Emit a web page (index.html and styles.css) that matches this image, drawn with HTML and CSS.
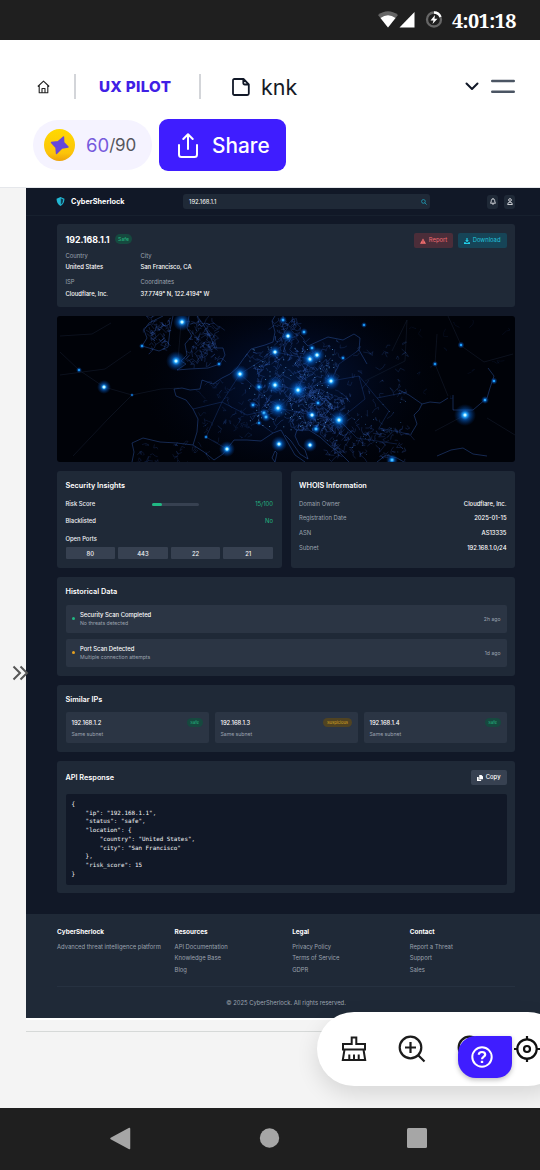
FILE: index.html
```html
<!DOCTYPE html>
<html lang="en">
<head>
<meta charset="utf-8">
<title>UX Pilot</title>
<link rel="stylesheet" href="styles.css">
</head>
<body>
<div class="status">
  <svg class="status-icons" width="68" height="20" viewBox="0 0 68 20">
    <path d="M0 5Q10-2.500 20 5L10 17.500Z" fill="#666"/><path d="M2.500 8Q10 2.500 17.500 8L10 17.500Z" fill="#fff"/>
    <path d="M21.500 17.500H36.500V2Z" fill="#fff"/>
    <circle cx="56" cy="9.500" r="7" fill="none" stroke="#666" stroke-width="2.300"/>
    <path d="M56 2.500A7 7 0 0 1 62.500 7" fill="none" stroke="#fff" stroke-width="2.300"/>
    <path d="M57 5L52.500 10.500H55.500L54.500 14L59.500 8.700H56.500Z" fill="#fff"/>
  </svg>
  <span class="clock">4:01:18</span>
</div>

<header class="top">
  <div class="top-row">
    <svg class="home" width="13" height="14" viewBox="0 0 13 14" fill="none" stroke="#222" stroke-width="1.100" stroke-linejoin="round"><path d="M.8 6.500L6.500 1.200L12.200 6.500M2.200 5.500V12.700H10.800V5.500M5 12.500V8.500H8V12.500"/></svg>
    <i class="sep"></i>
    <span class="brand">UX PILOT</span>
    <i class="sep sep2"></i>
    <svg class="file" width="18" height="18" viewBox="0 0 18 18" fill="none" stroke="#111827" stroke-width="1.800" stroke-linejoin="round"><path d="M2.500 1H11.500L16.800 6.300V15.500Q16.800 17 15.300 17H2.500Q1 17 1 15.500V2.500Q1 1 2.500 1ZM11.300 1.200V5Q11.300 6.500 12.800 6.500H16.500"/></svg>
    <span class="project">knk</span>
    <svg class="chev" width="14" height="9" viewBox="0 0 14 9" fill="none" stroke="#111827" stroke-width="2" stroke-linecap="round" stroke-linejoin="round"><path d="M1.500 1.500L7 7L12.500 1.500"/></svg>
    <svg width="24" height="15" viewBox="0 0 24 15" stroke="#4b5563" stroke-width="2.400" stroke-linecap="round"><path d="M1.200 2H22.800M1.200 12.800H22.800"/></svg>
  </div>
  <div class="actions">
    <div class="credits">
      <svg width="31" height="32" viewBox="0 0 31 32"><defs><linearGradient id="coin" x1="0" y1="0" x2="0" y2="1"><stop offset="0" stop-color="#ffd900"/><stop offset=".75" stop-color="#fcc40a"/><stop offset="1" stop-color="#eda20b"/></linearGradient></defs><ellipse cx="15.500" cy="16" rx="15.500" ry="16" fill="url(#coin)"/><path d="M19.500 8L19.700 13.500L24 18L18 19L12.500 24.500L12 18.500L7.500 13.500L14 12.700Z" fill="#6546dc" stroke="#6546dc" stroke-width="1.400" stroke-linejoin="round"/></svg>
      <span class="used">60</span><span class="total">/90</span>
    </div>
    <button class="share"><svg width="20" height="25" viewBox="0 0 20 25" fill="none" stroke="#fff" stroke-width="2" stroke-linecap="round" stroke-linejoin="round"><path d="M1 12V21.500Q1 24 3.500 24H16.500Q19 24 19 21.500V12M10 16V1.500M5.300 6L10 1.300L14.700 6"/></svg>Share</button>
  </div>
</header>

<main class="canvas">
  <div class="frame">
    <nav class="nav">
      <div class="logo"><svg width="9" height="9" viewBox="0 0 16 16"><path d="M8 0L15 3Q15 12 8 16Q1 12 1 3Z" fill="#22b8d4"/><path d="M8.500 2.200L13 4.300Q12.700 10.500 8.500 13.700Z" fill="#123d52"/></svg><span>CyberSherlock</span></div>
      <div class="search"><span>192.168.1.1</span><svg width="6" height="6" viewBox="0 0 16 16" fill="none" stroke="#1fa6c0" stroke-width="2"><circle cx="6.500" cy="6.500" r="5"/><path d="M10 10L15 15"/></svg></div>
      <div class="tools">
        <i><svg width="6" height="7" viewBox="0 0 14 16" fill="none" stroke="#e5e7eb" stroke-width="2"><path d="M1 12Q3 10 3 6A4 4 0 0 1 11 6Q11 10 13 12ZM5 14H9M7 0V2"/></svg></i>
        <i><svg width="6" height="7" viewBox="0 0 14 16" fill="none" stroke="#e5e7eb" stroke-width="2"><circle cx="7" cy="4.500" r="3.200"/><path d="M1.500 15Q1.500 9.500 7 9.500T12.500 15Z"/></svg></i>
      </div>
    </nav>

    <div class="content">
      <section class="card summary">
        <div class="summary-head">
          <h1>192.168.1.1</h1><span class="badge safe big">Safe</span>
          <span class="btn red"><svg width="6" height="6" viewBox="0 0 16 16"><path d="M8 1L16 15H0Z" fill="#f87171"/><path d="M8 6V10M8 11.500V13" stroke="#63303c" stroke-width="1.800"/></svg>Report</span>
          <span class="btn cyan"><svg width="6" height="6" viewBox="0 0 16 16" fill="#22d3ee"><path d="M6.500 0H9.500V6H13L8 11L3 6H6.500ZM0 11H4L8 14L12 11H16V16H0Z"/></svg>Download</span>
        </div>
        <div class="facts">
          <div><span>Country</span><b>United States</b></div><div><span>City</span><b>San Francisco, CA</b></div>
          <div><span>ISP</span><b>Cloudflare, Inc.</b></div><div><span>Coordinates</span><b>37.7749° N, 122.4194° W</b></div>
        </div>
      </section>

      <svg class="map" viewBox="0 0 458 146" width="458" height="146">
        <defs>
          <radialGradient id="land"><stop offset="0" stop-color="#032158" stop-opacity=".6"/><stop offset=".45" stop-color="#020f30" stop-opacity=".55"/><stop offset="1" stop-color="#010514" stop-opacity="0"/></radialGradient>
          <radialGradient id="glow"><stop offset="0" stop-color="#8ee6ff"/><stop offset=".2" stop-color="#20a4ff"/><stop offset=".45" stop-color="#0763cd" stop-opacity=".6"/><stop offset="1" stop-color="#023a91" stop-opacity="0"/></radialGradient>
        </defs>
        <rect width="458" height="146" fill="#000208"/>
        <ellipse cx="235" cy="68" rx="150" ry="100" fill="url(#land)"/>
        <path d="M92 32L85 30L90 22L87 14L92 7L100 3L106 0M116 0L113 14L111 31L102 35L92 32M140 0L146 8L153 20L158 32L166 32L168 39L163 48L151 52L132 53L120 54L129 48L124 45L130 39L128 28L135 20L130 12L132 0M117 73L125 72L133 74L143 73L145 64L156 68L165 62L173 58L180 52L187 42L194 33L208 29L216 26L218 16L215 5L218 0M117 73L119 80L129 84L136 93L141 103L140 116L136 129L120 127L103 126L86 122L75 127L77 136L75 146M136 129L147 136L157 144M157 144L166 138L170 133L177 124L190 124L204 125L216 117L224 114L230 125L238 139L248 146M218 135L215 142L218 146L220 137ZM228 119L234 125L243 138L251 143L248 134L242 129L238 120L240 114L252 114L263 121L273 130L283 137L292 146M246 25L251 30L262 25L271 21L286 24L297 18L303 22L302 34L310 48M320 146L329 139L340 142L347 146M354 118L360 108L357 99L362 94L365 88L352 79L342 74M365 88L373 86L383 87L391 82M396 79V94H416L430 82L433 72L437 60L431 52M380 140L394 134L406 132L416 138L430 140" fill="none" stroke="#3260b8" stroke-opacity=".6" stroke-width=".7"/>
        <path d="M3 36L22 54L47 71L75 79L104 73L122 72M75 79L51 103L16 140M3 20L35 18L54 7M3 59L48 53L74 35M124 7L121 44M380 18L378 48L391 80M403 29L427 46L456 38M404 29L391 0M335 35L350 4L348 45L308 65M430 102L458 119M378 115L408 99" fill="none" stroke="#253651" stroke-opacity=".6" stroke-width=".5"/>
        <path d="M218 69L241 74L274 65L260 39L253 43L241 74L221 92L183 58L218 36L253 43M221 92L255 99L282 104L261 87L241 74M183 58L165 86L136 93M165 86L190 99L221 92M165 86L149 121L170 133M274 65L302 60L308 83L282 104M302 60L320 82L350 76M320 82L332 95L322 112L352 118M282 104L300 122L340 128M302 34L282 48L274 65M202 71L202 107L216 117" fill="none" stroke="#2b58ad" stroke-opacity=".5" stroke-width=".6"/>
        <g id="network"></g>
      </svg>

      <div class="pair">
        <section class="card insights">
          <h2>Security Insights</h2>
          <div class="row"><span>Risk Score</span><div class="meter"><i></i></div><em>15/100</em></div>
          <div class="row"><span>Blacklisted</span><em>No</em></div>
          <div class="row"><span>Open Ports</span></div>
          <div class="ports"><span>80</span><span>443</span><span>22</span><span>21</span></div>
        </section>
        <section class="card whois">
          <h2>WHOIS Information</h2>
          <div class="row"><span>Domain Owner</span><b>Cloudflare, Inc.</b></div>
          <div class="row"><span>Registration Date</span><b>2025-01-15</b></div>
          <div class="row"><span>ASN</span><b>AS13335</b></div>
          <div class="row"><span>Subnet</span><b>192.168.1.0/24</b></div>
        </section>
      </div>

      <section class="card history">
        <h2>Historical Data</h2>
        <div class="event"><i class="dot green"></i><div><b>Security Scan Completed</b><span>No threats detected</span></div><time>2h ago</time></div>
        <div class="event"><i class="dot amber"></i><div><b>Port Scan Detected</b><span>Multiple connection attempts</span></div><time>1d ago</time></div>
      </section>

      <section class="card similar">
        <h2>Similar IPs</h2>
        <div class="tiles">
          <div class="tile"><div><b>192.168.1.2</b><span class="badge safe">Safe</span></div><p>Same subnet</p></div>
          <div class="tile"><div><b>192.168.1.3</b><span class="badge warn">Suspicious</span></div><p>Same subnet</p></div>
          <div class="tile"><div><b>192.168.1.4</b><span class="badge safe">Safe</span></div><p>Same subnet</p></div>
        </div>
      </section>

      <section class="card api">
        <div class="api-head"><h2>API Response</h2><span class="btn gray"><svg width="6" height="6" viewBox="0 0 16 16" fill="#fff"><path d="M6 0H12L16 4V11H6ZM0 5H4.500V12.500H11V16H0Z"/></svg>Copy</span></div>
<pre>{
    "ip": "192.168.1.1",
    "status": "safe",
    "location": {
        "country": "United States",
        "city": "San Francisco"
    },
    "risk_score": 15
}</pre>
      </section>
    </div>

    <footer class="footer">
      <div class="cols">
        <div><h3>CyberSherlock</h3><p>Advanced threat intelligence platform</p></div>
        <div><h3>Resources</h3><p>API Documentation</p><p>Knowledge Base</p><p>Blog</p></div>
        <div><h3>Legal</h3><p>Privacy Policy</p><p>Terms of Service</p><p>GDPR</p></div>
        <div><h3>Contact</h3><p>Report a Threat</p><p>Support</p><p>Sales</p></div>
      </div>
      <div class="copyright">© 2025 CyberSherlock. All rights reserved.</div>
    </footer>
  </div>
  <div class="strip"></div>

  <svg class="expand" width="17" height="16" viewBox="0 0 17 16" fill="none" stroke="#555" stroke-width="2"><path d="M1.500 1.500L8 8L1.500 14.500M8.500 1.500L15 8L8.500 14.500"/></svg>

  <div class="toolbar">
    <svg width="26" height="26" viewBox="0 0 26 26" fill="none" stroke="#1c1c1c" stroke-width="2"><path d="M10.700 8V1.500H15.300V8H24V13.500H2V8ZM3.500 13.500L1.800 24H24.200L22.500 13.500M8.300 24V18.500M13 24V18.500M17.700 24V18.500"/></svg>
    <svg width="28" height="28" viewBox="0 0 28 28" fill="none" stroke="#1c1c1c" stroke-width="2.200"><circle cx="12.500" cy="12.500" r="10.800"/><path d="M20.200 20.200L26.500 26.500M12.500 7V18M7 12.500H18"/></svg>
    <svg width="28" height="28" viewBox="0 0 28 28" fill="none" stroke="#1c1c1c" stroke-width="2.200"><circle cx="12.500" cy="12.500" r="10.800"/><path d="M20.200 20.200L26.500 26.500M7 12.500H18"/></svg>
    <svg width="26" height="26" viewBox="0 0 26 26" fill="none" stroke="#111" stroke-width="2.200"><circle cx="13" cy="13" r="9.700"/><circle cx="13" cy="13" r="3"/><path d="M13 0V4M13 22V26M0 13H4M22 13H26"/></svg>
  </div>
  <div class="help"><svg width="22" height="22" viewBox="0 0 22 22" fill="none" stroke="#fff" stroke-width="2"><circle cx="11" cy="11" r="9.700"/><path d="M7.800 8.800Q7.800 6 11 6T14.200 8.700C14.200 10.500 11 10.700 11 13.200" stroke-width="2.200"/><path d="M11 14.800V17" stroke-width="2.400"/></svg></div>
</main>

<div class="navbar">
  <svg width="540" height="62" viewBox="0 0 540 62" fill="#a6a6a6"><path d="M111 30.500L129.500 20.500V40.500Z" stroke="#a6a6a6" stroke-width="1.500" stroke-linejoin="round"/><circle cx="269.500" cy="30" r="9.700"/><rect x="407" y="20" width="20" height="20" rx="1.500"/></svg>
</div>
<script src="map.js"></script>
</body>
</html>
```
FILE: styles.css
```css
* { box-sizing: border-box; margin: 0; padding: 0; }
body { width: 540px; height: 1170px; overflow: hidden; display: flex; flex-direction: column; font-family: Inter, sans-serif; background: #fff; }
svg { display: block; flex: none; }
i, em { font-style: normal; }
.status { height: 40px; background: #1f1f1f; display: flex; align-items: center; padding-left: 378px; }
.clock { margin-left: 6px; font: bold 19.800px "Noto Serif", "Liberation Serif", serif; letter-spacing: -.6px; color: #fff; }
.top { height: 148px; border-bottom: 1px solid #e5e7eb; background: #fff; padding: 30.500px 25px 0 33px; }
.top-row { height: 32px; display: flex; align-items: center; padding-left: 4px; }
.sep { width: 2px; height: 25px; background: #d3d5d9; margin-left: 24px; }
.sep2 { margin-left: 29px; }
.brand { width: 71px; margin-left: 23px; font-size: 15.200px; font-weight: 800; color: #3f20e5; letter-spacing: .3px; white-space: nowrap; }
.file { margin-left: 31px; }
.project { margin-left: 11px; font-size: 21.500px; color: #161a25; }
.chev { margin-left: auto; margin-right: 12px; }
.actions { display: flex; align-items: center; margin-top: 16.500px; gap: 7px; }
.credits { width: 119px; height: 50px; border-radius: 25px; background: #f5f3ff; display: flex; align-items: center; padding-left: 11px; }
.used { margin-left: 11px; font-size: 18.500px; color: #7659dc; }
.total { font-size: 17px; color: #55565c; letter-spacing: -.2px; }
.share { width: 127px; height: 52px; border: 0; border-radius: 9px; background: #3f1dff; color: #fff; font: 500 20.800px Inter, sans-serif; display: flex; align-items: center; padding-left: 19px; gap: 14px; }

.canvas { position: relative; height: 920px; background: #f4f4f4; overflow: hidden; }
.frame { width: 520px; height: 830px; margin-left: 26px; background: #111827; color: #f3f4f6; font-size: 5.860px; line-height: 8.800px; }
.frame b { font-weight: 500; color: #fff; }
.frame span, .frame b { white-space: nowrap; }
.nav { height: 28px; border-bottom: 1px solid #17202e; padding: 0 31px 0 30px; display: flex; align-items: center; }
.logo { width: 127px; display: flex; align-items: center; gap: 6px; font-size: 7.300px; font-weight: 700; color: #fff; }
.logo span, .search span { padding-top: 1.200px; }
.search { width: 247px; height: 15px; border-radius: 3px; background: #1f2937; display: flex; align-items: center; justify-content: space-between; padding: 0 3px 0 6px; color: #fff; }
.tools { margin-left: auto; display: flex; gap: 6px; }
.tools i { width: 11px; height: 14px; background: #1f2937; border-radius: 3px; display: flex; align-items: center; justify-content: center; }
.content { padding: 8px 31px 0; display: flex; flex-direction: column; gap: 9px; }
.card { background: #1f2937; border-radius: 3px; padding: 9.700px 8.500px 0; }
h1 { font-size: 8.800px; font-weight: 700; color: #fff; line-height: 11px; }
h2 { font-size: 7.300px; font-weight: 600; color: #fff; line-height: 10px; }
.summary { height: 83px; }
.summary-head { height: 16px; display: flex; align-items: flex-start; }
.badge { border-radius: 5px; height: 9px; padding: 0 3.500px; font-size: 4.100px; line-height: 9.600px; }
.badge.big { margin: .3px auto 0 5px; height: 10px; line-height: 10.600px; font-size: 5.100px; }
.safe { background: #16493f; color: #25b880; }
.warn { background: #504322; color: #d9a520; }
.btn { height: 15px; border-radius: 2px; display: flex; align-items: center; gap: 3px; padding: .6px 6px 0; font-size: 5.860px; }
.summary .btn { margin-top: -.7px; padding-left: 5.500px; }
.red { background: #4b2d39; color: #f26b72; }
.cyan { background: #164457; color: #22c3dc; margin-left: 5px; }
.gray { background: #374151; color: #fff; font-weight: 500; }
.facts { display: grid; grid-template-columns: 75px 120px; row-gap: 3px; line-height: 11.800px; }
.facts div { display: flex; flex-direction: column; }
.facts span, .whois span { color: #9ca3af; }
.map { border-radius: 3px; }
.pair { display: grid; grid-template-columns: 1fr 1fr; gap: 9px; }
.pair .card { height: 97px; }
.row { display: flex; justify-content: space-between; align-items: center; }
.insights .row { height: 17.800px; }
.insights .row span { font-weight: 500; }
.insights h2 { margin-bottom: 4.500px; }
.insights em { color: #22b982; }
.meter { width: 47px; height: 3px; border-radius: 2px; background: #374151; margin-left: 18px; }
.meter i { display: block; width: 10px; height: 3px; border-radius: 2px; background: #20b883; }
.row:nth-child(2) em { width: 36px; text-align: right; }
.ports { display: grid; grid-template-columns: repeat(4, 1fr); gap: 3px; margin-top: -1.100px; }
.ports span { height: 12px; line-height: 13px; text-align: center; background: #374151; border-radius: 1px; font-weight: 500; }
.whois h2 { margin-bottom: 6px; }
.whois .row { height: 14.700px; }
.history { height: 99px; }
.event { height: 28px; margin-top: 8.300px; padding: 1px 6px 0; border-radius: 2px; background: #2b3544; display: flex; align-items: center; }
.event + .event { margin-top: 6px; }
.event div { display: flex; flex-direction: column; margin-left: 5.500px; }
.event span, .event time { font-size: 5.130px; line-height: 7.500px; color: #9ca3af; }
.event time { margin-left: auto; }
.dot { width: 3px; height: 3px; border-radius: 50%; margin-top: -1px; }
.green { background: #20b883; }
.amber { background: #e5a020; }
.similar { height: 67px; }
.tiles { display: grid; grid-template-columns: repeat(3, 1fr); gap: 6px; margin-top: 7.300px; }
.tile { height: 31px; background: #2b3544; border-radius: 2px; padding: 6px; }
.tile div { display: flex; justify-content: space-between; align-items: center; }
.tile b { padding-top: 1px; }
.tile p { font-size: 5.130px; line-height: 7.300px; margin-top: 3px; color: #9ca3af; }
.api { height: 132px; padding-top: 9px; }
.api-head { display: flex; justify-content: space-between; align-items: center; }
pre { height: 91px; margin-top: 8.500px; padding: 6.300px 6px; border-radius: 2px; background: #111827; font: 5.860px/8.780px "DejaVu Sans Mono", monospace; color: #f3f4f6; }
.footer { height: 104px; margin-top: 21px; background: #1f2937; padding: 12.700px 31px 0; }
.cols { height: 60.300px; border-bottom: 1px solid #263140; display: grid; grid-template-columns: repeat(4, 117.600px); line-height: 11.800px; color: #9ca3af; }
h3 { font-size: 6.400px; line-height: 10px; margin-bottom: 4px; font-weight: 700; color: #fff; }
.cols p { white-space: nowrap; }
.copyright { text-align: center; margin-top: 11.700px; color: #9ca3af; }
.strip { height: 14px; margin-left: 26px; border-top: 2px solid #fff; border-bottom: 1px solid #d6d9d8; }
.expand { position: absolute; left: 12px; top: 477px; }
.toolbar { position: absolute; left: 317px; top: 824px; width: 248px; height: 74px; border-radius: 37px; background: #fff; box-shadow: 0 8px 22px rgba(0,0,0,.12); display: flex; align-items: center; gap: 31px; padding-left: 24px; }
.toolbar svg:nth-child(4) { margin-left: -2px; }
.help { position: absolute; left: 458px; top: 848px; width: 54px; height: 42px; border-radius: 18px 2px 15px 18px; background: #3f1dff; box-shadow: 0 2px 5px rgba(0,0,0,.25); display: flex; align-items: center; padding-left: 13px; }
.navbar { height: 62px; background: #1f1f1f; }
```
FILE: map.js
```js
// Draws the fine road mesh and the glowing city nodes of the threat map.
const NS = 'http://www.w3.org/2000/svg';
const group = document.getElementById('network');
let seed = 41;
const rand = () => (seed = (seed * 16807) % 2147483647) / 2147483647;

// Land areas: x, y, width, height, number of roads, opacity
const areas = [
  [89, 3, 23, 28, 40, .8], [132, 3, 28, 47, 75, .8], [145, 65, 50, 58, 45, .5],
  [195, 32, 75, 82, 190, .9], [218, 0, 25, 28, 40, .9], [240, 75, 45, 40, 90, .9],
  [265, 25, 85, 95, 70, .6], [270, 112, 80, 32, 80, .75], [80, 128, 75, 18, 25, .55],
  [350, 5, 100, 75, 14, .3]
];
for (const [x, y, w, h, n, o] of areas) {
  let d = '';
  for (let k = 0; k < n; k++) {
    d += `M${(x + rand() * w).toFixed(1)} ${(y + rand() * h).toFixed(1)}`;
    for (let j = 0; j < 3; j++) d += `l${((rand() - .5) * 9).toFixed(1)} ${((rand() - .5) * 9).toFixed(1)}`;
  }
  const p = document.createElementNS(NS, 'path');
  p.setAttribute('d', d);
  p.setAttribute('fill', 'none');
  p.setAttribute('stroke', '#3a68c4');
  p.setAttribute('stroke-opacity', o * .7);
  p.setAttribute('stroke-width', '.45');
  group.append(p);
}

const circle = (x, y, r, fill, o = 1) => {
  const c = document.createElementNS(NS, 'circle');
  c.setAttribute('cx', x); c.setAttribute('cy', y); c.setAttribute('r', r);
  c.setAttribute('fill', fill); c.setAttribute('opacity', o);
  group.append(c);
};
for (let k = 0; k < 110; k++) circle(192 + rand() * 85, 30 + rand() * 85, .5, '#66b5ff', .8);
for (let k = 0; k < 30; k++) circle(265 + rand() * 85, 80 + rand() * 62, .45, '#4e96ed', .7);

// City nodes: x, y, glow radius
const nodes = [
  [125,6,9],[119,45,10],[85,30,3],[47,71,7],[22,54,3],[75,79,2],[183,58,9],[218,36,7],[218,69,9],
  [221,92,10],[170,133,8],[222,128,8],[226,4,4],[231,20,7],[162,48,3],[202,71,5],[196,89,4],[207,97,5],
  [209,101,5],[149,121,2.5],[202,107,3],[307,9,3],[247,16,4],[253,43,9],[260,39,8],[255,32,4],[274,65,9],
  [241,74,10],[282,104,10],[255,99,7],[259,113,5],[253,129,7],[408,99,11],[428,84,4],[437,65,3.5],
  [404,29,3.5],[378,48,3],[261,87,4],[286,42,3],[335,144,6]
];
for (const [x, y, r] of nodes) {
  circle(x, y, r, 'url(#glow)');
  if (r > 6) circle(x, y, 1.5, '#c8f7ff');
}
```
